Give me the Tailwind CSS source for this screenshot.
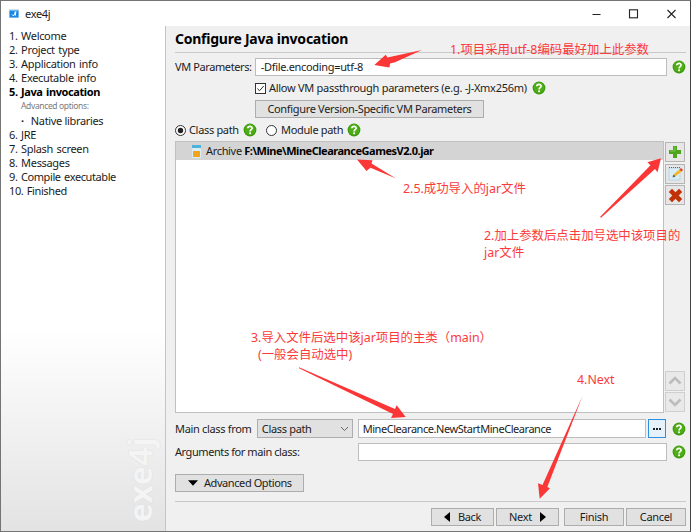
<!DOCTYPE html>
<html lang="zh">
<head>
<meta charset="utf-8">
<title>exe4j</title>
<script src="https://cdn.jsdelivr.net/npm/@tailwindcss/browser@4"></script>
</head>
<body class="w-[691px] h-[532px] overflow-hidden">
<svg class="hidden">
  <symbol id="help" viewBox="0 0 14 14"><circle cx="7" cy="7" r="6.4" fill="#3c9a0c"/><circle cx="7" cy="6.5" r="5.3" fill="#4fae17"/><path d="M4.8 5.3C4.9 2.7 9.2 2.8 9.1 5.2 9 6.7 7.1 6.7 7.1 8.4" fill="none" stroke="#fff" stroke-width="1.7"/><rect x="6.2" y="9.4" width="1.8" height="1.8" fill="#fff"/></symbol>
</svg>
<div class="relative flex h-[532px] w-[691px] flex-col overflow-hidden border border-[#747474] border-r-[#454545] bg-[#f0f0f0] font-['Noto_Sans','Noto_Sans_CJK_SC',sans-serif] text-[11px] leading-[14px] tracking-[-0.33px] whitespace-nowrap text-[#1c1c1c]">
  <header class="flex h-[25px] shrink-0 items-center bg-white pl-[8px]">
    <svg class="h-[9px] w-[10px]" viewBox="0 0 10 9"><rect width="10" height="9" fill="#cfe0ea"/><rect x=".5" y="1.500" width="9" height="7" fill="#1689e8"/><path d="M3 5.500l1.500 1.500L6.500 3v3.500M5.500 3h2" stroke="#fff" fill="none"/></svg>
    <span class="ml-[6px] text-[11px]">exe4j</span>
    <svg class="mr-[14px] ml-auto h-[10px] w-[85px]" viewBox="0 0 85 10" fill="none" stroke="#222" stroke-width="1.1"><path d="M1.500 5.500h8M76.500 1l8 8M84.500 1l-8 8"/><rect x="38.500" y=".8" width="8" height="8"/></svg>
  </header>
  <div class="flex min-h-0 flex-1">
    <aside class="relative w-[165px] shrink-0 border-r border-[#c4c4c4] bg-linear-to-b from-white from-60% to-[#e3e3e3] pt-[3px] pl-[8px] leading-[14.09px]">
      <ol>
        <li class="[word-spacing:1px]">1. Welcome</li>
        <li class="[word-spacing:1px]">2. Project type</li>
        <li class="[word-spacing:1px]">3. Application info</li>
        <li class="[word-spacing:1px]">4. Executable info</li>
        <li class="font-bold tracking-[-0.4px] text-black [word-spacing:1px]">5. Java invocation</li>
        <li class="pl-[12px] text-[8.500px] tracking-[-0.36px] text-[#7a7a7a]">Advanced options:</li>
        <li class="pl-[12px]"><b>·</b><span class="ml-[7px]">Native libraries</span></li>
        <li class="[word-spacing:1px]">6. JRE</li>
        <li class="[word-spacing:1px]">7. Splash screen</li>
        <li class="[word-spacing:1px]">8. Messages</li>
        <li class="tracking-[-0.4px] [word-spacing:1px]">9. Compile executable</li>
        <li class="tracking-[-0.4px] [word-spacing:1px]">10. Finished</li>
      </ol>
      <div class="absolute bottom-[9px] left-[122px] rotate-180 text-[32px] leading-[34px] font-bold tracking-[0.4px] text-[#f4f4f4] [text-shadow:0_0_1px_#cfcfcf] [writing-mode:vertical-rl]">exe4j</div>
    </aside>
    <main class="flex min-w-0 flex-1 flex-col pr-[4px] pl-[9px]">
      <h1 class="h-[27px] border-b border-[#c9c9c9] text-[14px] leading-[26px] font-bold tracking-[-0.24px] text-black">Configure Java invocation</h1>
      <div class="mt-[5px] flex h-[18px] items-center">
        <span class="w-[80px] tracking-[-0.4px]">VM Parameters:</span>
        <div class="h-[18px] w-[413px] border border-[#bdbdbd] bg-white pl-[5px] leading-[16px]">-Dfile.encoding=utf-8</div>
        <svg class="ml-[5px] size-[14px]"><use href="#help"/></svg>
      </div>
      <div class="mt-[5px] ml-[80px] flex h-[14px] items-center">
        <svg class="size-[11px]" viewBox="0 0 11 11" fill="none" stroke="#333"><rect x=".5" y=".5" width="10" height="10" fill="#fff"/><path d="M2.500 5.500l2 2.300L8.700 3"/></svg>
        <span class="ml-[3px] w-[263px] tracking-[-0.28px]">Allow VM passthrough parameters (e.g. -J-Xmx256m)</span>
        <svg class="size-[14px]"><use href="#help"/></svg>
      </div>
      <div class="mt-[5px] ml-[80px] h-[18px] w-[229px] border border-[#adadad] bg-[#e1e1e1] text-center leading-[16px]">Configure Version-Specific VM Parameters</div>
      <div class="mt-[5px] flex h-[14px] items-center">
        <svg class="size-[11px]" viewBox="0 0 11 11"><circle cx="5.500" cy="5.500" r="5" fill="#fff" stroke="#333"/><circle cx="5.500" cy="5.500" r="2.700" fill="#222"/></svg>
        <span class="ml-[3px] w-[54px]">Class path</span>
        <svg class="size-[14px]"><use href="#help"/></svg>
        <svg class="ml-[9px] size-[11px]" viewBox="0 0 11 11"><circle cx="5.500" cy="5.500" r="5" fill="#fff" stroke="#333"/></svg>
        <span class="ml-[4px] w-[66px]">Module path</span>
        <svg class="size-[14px]"><use href="#help"/></svg>
      </div>
      <div class="mt-[4px] flex h-[272px]">
        <div class="w-[489px] border border-[#c0c0c0] bg-white">
          <div class="flex h-[18px] items-center bg-[#d4d4d4] pl-[15px]">
            <svg class="h-[13px] w-[11px]" viewBox="0 0 11 13"><rect x="1" width="9" height="3" fill="#4db3dc"/><rect x="1" y="3" width="9" height="10" rx="1" fill="#d8edf5"/><rect x="2" y="6" width="7" height="6" fill="#f5a31a"/></svg>
            <span class="ml-[4px]">Archive <b class="tracking-[-0.47px] text-black">F:\Mine\MineClearanceGamesV2.0.jar</b></span>
          </div>
        </div>
        <div class="ml-[1px] flex w-[20px] flex-col gap-[1.500px] pt-px">
          <div class="grid size-[20px] place-items-center border border-[#b5b5b5] bg-[#e6e6e6]"><svg class="size-[14px]" viewBox="0 0 14 14"><path d="M5 1h4v4h4v4H9v4H5V9H1V5h4z" fill="#4ca51c"/><path d="M6 2h1v4H2" stroke="#7cc94a" fill="none"/></svg></div>
          <div class="grid size-[20px] place-items-center border border-[#b5b5b5] bg-[#e6e6e6]"><svg class="size-[15px]" viewBox="0 0 15 15"><rect x="1" y="2" width="11" height="12" fill="#d7eef8" stroke="#a9c8d5" stroke-width=".6"/><path d="M1 1.500h11" stroke="#666" stroke-dasharray="1 1"/><path d="M5 11l1-3 6-5 2 2-6 5z" fill="#f4b62c"/><path d="M11.500 3.500l1.500-1.500 2 2-1.500 1.500z" fill="#d9402c"/><path d="M4.500 11.500l1-3 2 2z" fill="#555"/></svg></div>
          <div class="grid size-[20px] place-items-center border border-[#b5b5b5] bg-[#e6e6e6]"><svg class="size-[15px]" viewBox="0 0 15 15"><path d="M4 .8L7.500 4.300 11 .8 14.200 4 10.700 7.500 14.200 11 11 14.200 7.500 10.700 4 14.200.8 11 4.300 7.500.8 4z" fill="#c13208"/></svg></div>
          <div class="mt-auto grid size-[20px] place-items-center border border-[#cfcfcf] bg-[#e9e9e9]"><svg class="h-[9px] w-[14px]" viewBox="0 0 14 9"><path d="M1.500 7.500L7 2l5.500 5.500" fill="none" stroke="#bcbcbc" stroke-width="2.600"/></svg></div>
          <div class="mb-px grid size-[20px] place-items-center border border-[#cfcfcf] bg-[#e9e9e9]"><svg class="h-[9px] w-[14px]" viewBox="0 0 14 9"><path d="M1.500 1.500L7 7l5.500-5.500" fill="none" stroke="#bcbcbc" stroke-width="2.600"/></svg></div>
        </div>
      </div>
      <div class="mt-[6px] flex h-[19px] items-center">
        <span class="w-[82px]">Main class from</span>
        <div class="flex h-[19px] w-[96px] items-center justify-between border border-[#adadad] bg-[#e1e1e1] pr-[3px] pl-[4px]">Class path<svg class="h-[6px] w-[9px]" viewBox="0 0 9 6"><path d="M1 1l3.500 3.500L8 1" fill="none" stroke="#666"/></svg></div>
        <div class="ml-[5px] h-[19px] w-[289px] border border-[#bdbdbd] bg-white pl-[4px] leading-[17px] tracking-[-0.45px]">MineClearance.NewStartMineClearance</div>
        <div class="ml-[2px] grid h-[19px] w-[18px] place-items-center border border-[#2f8fdc] bg-[#e5f1fb]"><svg class="h-[2px] w-[8px]" viewBox="0 0 8 2"><path d="M0 0h2v2H0zM3 0h2v2H3zM6 0h2v2H6z" fill="#222"/></svg></div>
        <svg class="ml-[6px] size-[14px]"><use href="#help"/></svg>
      </div>
      <div class="mt-[5px] flex h-[18px] items-center">
        <span class="w-[183px] tracking-[-0.42px]">Arguments for main class:</span>
        <div class="h-[18px] w-[310px] border border-[#bdbdbd] bg-white"></div>
        <svg class="ml-[5px] size-[14px]"><use href="#help"/></svg>
      </div>
      <div class="mt-[13px] flex h-[18px] w-[129px] items-center border border-[#adadad] bg-[#e1e1e1] pl-[12px] tracking-[-0.42px]"><svg class="mr-[6px] h-[6px] w-[10px]" viewBox="0 0 11 6"><path d="M0 0h11L5.500 6z"/></svg>Advanced Options</div>
      <div class="mt-[9px] flex border-t border-[#c9c9c9] pt-[6px]">
        <div class="ml-auto flex h-[18px] w-[63px] items-center justify-center gap-[8px] border border-[#adadad] bg-[#e1e1e1]"><svg class="h-[10px] w-[6px]" viewBox="0 0 6 10"><path d="M6 0v10L0 5z"/></svg>Back</div>
        <div class="ml-[2px] flex h-[18px] w-[63px] items-center justify-center gap-[8px] border border-[#adadad] bg-[#e1e1e1]">Next<svg class="h-[10px] w-[6px]" viewBox="0 0 6 10"><path d="M0 0v10l6-5z"/></svg></div>
        <div class="ml-[5px] h-[18px] w-[60px] border border-[#adadad] bg-[#e1e1e1] text-center leading-[16px]">Finish</div>
        <div class="ml-[2px] h-[18px] w-[60px] border border-[#adadad] bg-[#e1e1e1] text-center leading-[16px]">Cancel</div>
      </div>
    </main>
  </div>
  <!-- Tutorial annotations drawn over the window -->
  <div class="pointer-events-none absolute -top-px -left-px h-[532px] w-[691px] text-[12.4px] leading-[17px] tracking-normal text-[#fb3a3a]">
    <svg class="absolute inset-0 size-full" viewBox="0 0 691 532" fill="#fb3636">
      <path d="M374.300 65L385.700 54.700 387.500 57.600 422 50 395 62.300 390 63.500 389.500 67.500z"/>
      <path d="M357 159.500L372.500 160.300 371.500 163.500 396 178.500 370.500 167.800 366.500 171z"/>
      <path d="M661 158.300L647.300 162.300 650.500 165.200 600 217 601 217.800 655 169 657.500 172.300z"/>
      <path d="M405.700 417L396.700 405.300 395 409 299 367.300 299 368.200 393 414 391 418z"/>
      <path d="M539.700 498.700L538 483.300 542.500 485 582.500 396 547.300 487 550 488.200z"/>
    </svg>
    <div class="absolute top-[41px] left-[450px]">1.项目采用utf-8编码最好加上此参数</div>
    <div class="absolute top-[180px] left-[403px]">2.5.成功导入的jar文件</div>
    <div class="absolute top-[227px] left-[484px]">2.加上参数后点击加号选中该项目的<br>jar文件</div>
    <div class="absolute top-[329px] left-[251px]">3.导入文件后选中该jar项目的主类（main）<br><span class="ml-[7px]">(一般会自动选中)</span></div>
    <div class="absolute top-[371px] left-[577px]">4.Next</div>
  </div>
</div>
</body>
</html>
